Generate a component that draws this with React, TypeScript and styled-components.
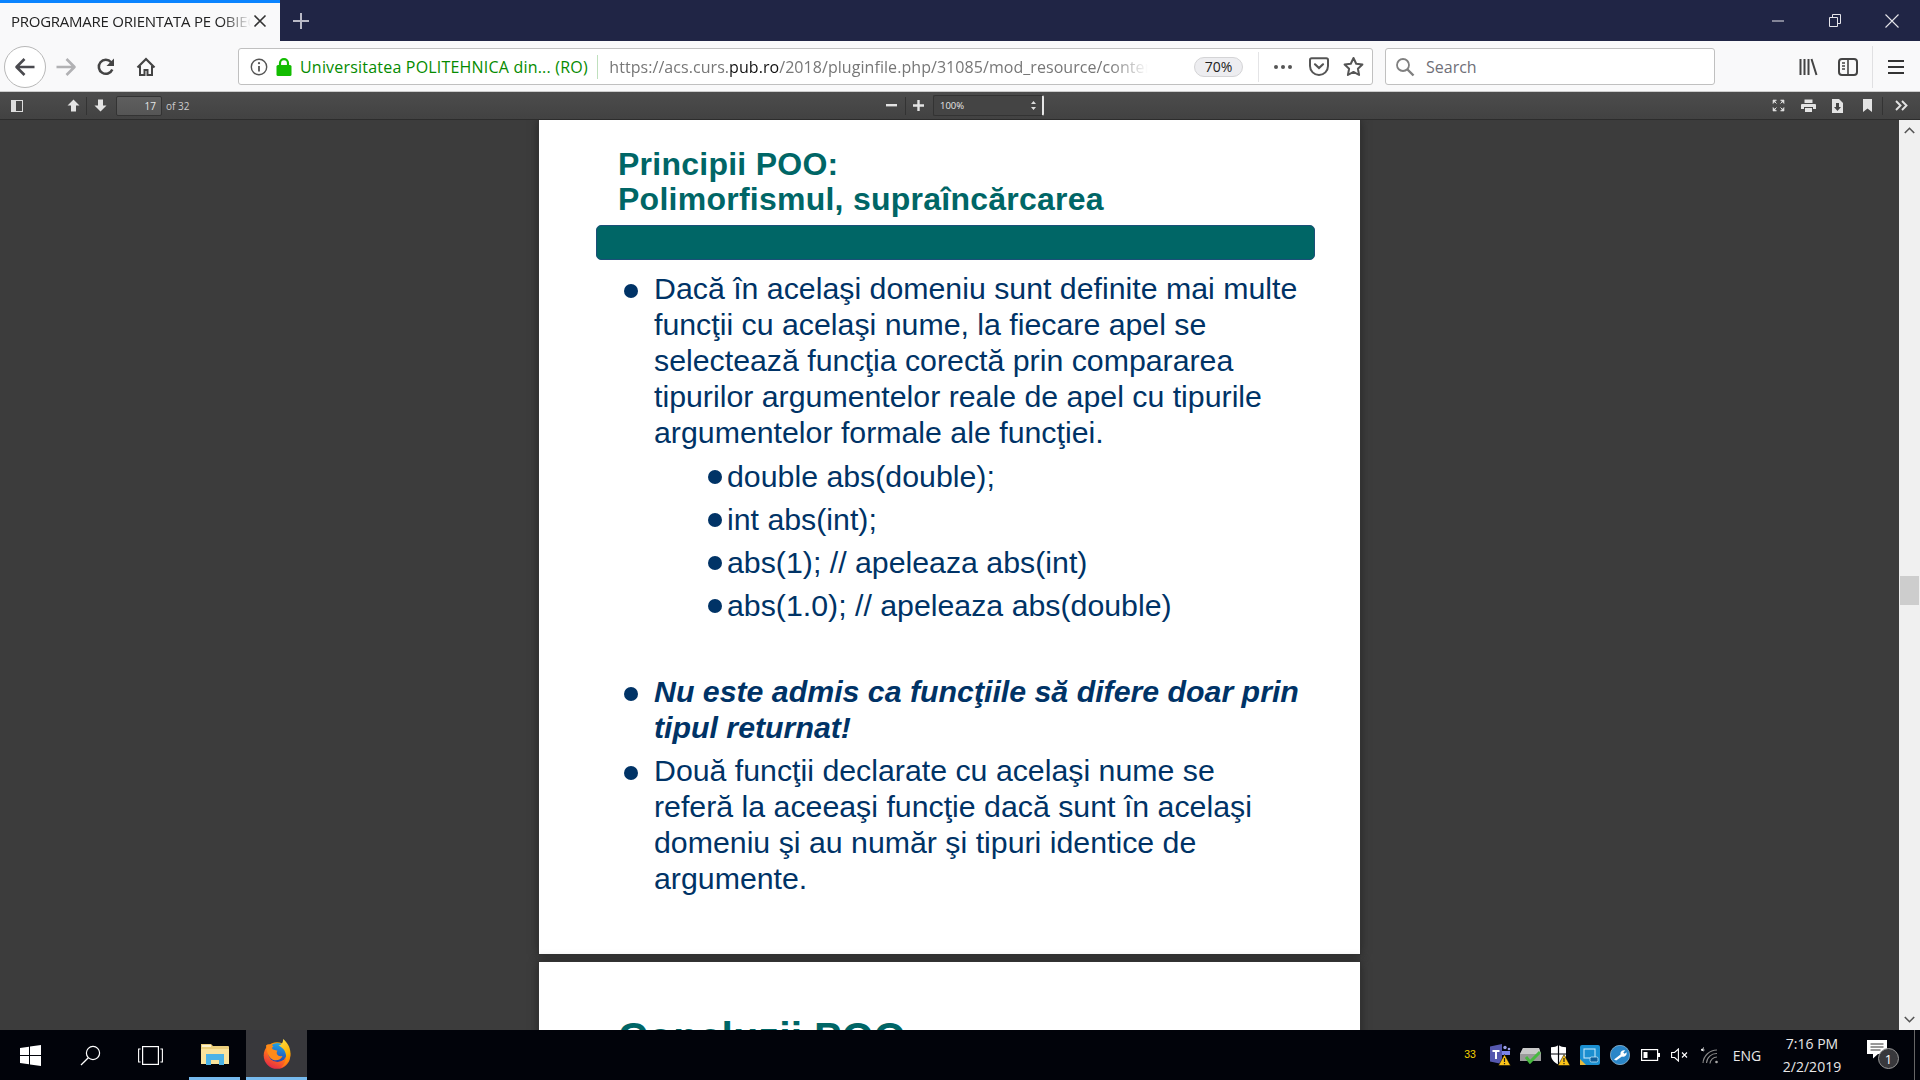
import React from "react";
import styled, { createGlobalStyle } from "styled-components";

const Global = createGlobalStyle`
  html, body { margin: 0; padding: 0; height: 100%; overflow: hidden; background: #3d3d3d; }
  #root { height: 100%; }
  * { box-sizing: border-box; }
`;

const Screen = styled.div`
  width: 1920px; height: 1080px; display: flex; flex-direction: column; overflow: hidden;
  font-family: "Open Sans", "Liberation Sans", sans-serif;
`;
const TitleBar = styled.div`
  height: 41px; background: #202545; display: flex; align-items: stretch; flex: none;
`;
const Tab = styled.div`
  width: 280px; background: #f9f9fa; border-top: 3px solid #0a84ff; display: flex; align-items: center; padding: 0 0 2px 11px;
`;
const TabLabel = styled.span`
  width: 240px; font-size: 15px; letter-spacing: -0.25px; color: #222; white-space: nowrap; overflow: hidden;
  -webkit-mask-image: linear-gradient(90deg, #000 88%, transparent 100%);
  mask-image: linear-gradient(90deg, #000 88%, transparent 100%);
`;
const Slot = styled.div<{ $w: number; $ml?: number }>`
  width: ${p => p.$w}px; margin-left: ${p => p.$ml ?? 0}px; flex: none; display: flex; align-items: center; justify-content: center;
`;
const Grow = styled.div`flex: 1;`;
const NavBar = styled.div`
  height: 51px; background: #f9f9fa; display: flex; align-items: center; padding: 1px 0 0 4px; flex: none; border-bottom: 1px solid #ccc;
`;
const BackButton = styled.div`
  width: 42px; height: 42px; border-radius: 50%; border: 1px solid #b8b8b8; background: #fff; display: flex; align-items: center; justify-content: center; flex: none;
`;
const UrlBar = styled.div`
  width: 1135px; height: 37px; margin-left: 72px; background: #fff; border: 1px solid #c0c0c0; border-radius: 3px; display: flex; align-items: center; flex: none; padding-left: 9px; font-size: 16px;
`;
const Identity = styled.span`
  color: #058b00; font-size: 16px; letter-spacing: 0.2px; margin-left: 3px; white-space: nowrap; width: 298px;
`;
const VSep = styled.div<{ $h: number; $c: string; $ml?: number }>`
  width: 1px; height: ${p => p.$h}px; background: ${p => p.$c}; margin-left: ${p => p.$ml ?? 0}px; flex: none;
`;
const Url = styled.span`
  width: 540px; margin-left: 11px; color: #777; font-size: 16px; letter-spacing: 0.06px; white-space: nowrap; overflow: hidden;
  -webkit-mask-image: linear-gradient(90deg, #000 93%, transparent 100%);
  mask-image: linear-gradient(90deg, #000 93%, transparent 100%);
  b { font-weight: 400; color: #111; }
`;
const ZoomPill = styled.span`
  width: 49px; height: 20px; margin-left: 46px; border-radius: 10px; background: #ededf0; border: 1px solid #d4d4d6; font-size: 14px; color: #222; display: flex; align-items: center; justify-content: center; flex: none;
`;
const SearchBox = styled.div`
  width: 330px; height: 37px; margin-left: 12px; background: #fff; border: 1px solid #c0c0c0; border-radius: 3px; display: flex; align-items: center; padding-left: 9px; color: #6f6f78; font-size: 16px; flex: none;
`;
const SearchLabel = styled.span`margin-left: 11px;`;
const PdfBar = styled.div`
  height: 28px; background: linear-gradient(#4c4c4c, #424242); display: flex; align-items: center; flex: none; border-bottom: 1px solid #2c2c2c; color: #d6d6d6; font-size: 10px;
`;
const PageInput = styled.div`
  width: 46px; height: 20px; margin-left: 3px; background: linear-gradient(#5e5e5e, #555); border: 1px solid #333; border-radius: 2px; display: flex; align-items: center; justify-content: flex-end; padding-right: 5px; font-size: 10px; color: #e6e6e6; flex: none;
`;
const PageCount = styled.span`margin-left: 4px; width: 30px; flex: none; color: #ccc;`;
const ZoomSelect = styled.div`
  width: 111px; height: 21px; margin-left: 3px; background: #444; border: 1px solid #333; border-right: 2px solid #e6e6e6; border-radius: 2px; display: flex; align-items: center; justify-content: space-between; padding: 0 6px; font-size: 9.5px; color: #e6e6e6; flex: none;
`;
const Content = styled.div`
  flex: 1; min-height: 0; display: flex; background: #3c3c3c;
`;
const Viewer = styled.div`
  flex: 1; min-width: 0; overflow: hidden; display: flex; flex-direction: column; align-items: center;
`;
const Sheet = styled.div<{ $h: number }>`
  width: 821px; height: ${p => p.$h}px; flex: none; background: #fff; overflow: hidden; box-shadow: 0 0 0 1px #333, 0 0 9px #222; margin-bottom: 8px;
  font-family: "Liberation Sans", Arial, sans-serif; color: #003366;
`;
const SheetTitle = styled.h1<{ $pt: number; $size: number }>`
  margin: 0; padding: ${p => p.$pt}px 0 0 79px; font-size: ${p => p.$size}px; letter-spacing: 0.25px; line-height: 34.5px; font-weight: 700; color: #006666; white-space: nowrap;
`;
const TitleBand = styled.div`
  width: 719px; height: 35px; margin: 9px 0 0 57px; background: #006666; border: 1px solid #1b4f78; border-radius: 5px;
`;
const Points = styled.ul`
  list-style: none; margin: 0; padding: 11px 0 0 85px;
`;
const Point = styled.li<{ $mt?: number; $strong?: boolean }>`
  position: relative; margin-top: ${p => p.$mt ?? 0}px; padding-left: 30px; font-size: 30.3px; line-height: 36px; white-space: nowrap;
  font-weight: ${p => (p.$strong ? 700 : 400)}; font-style: ${p => (p.$strong ? "italic" : "normal")};
  &::before { content: ""; position: absolute; left: 0; top: 13px; width: 14px; height: 14px; border-radius: 50%; background: #003366; }
`;
const SubGroup = styled.ul`
  list-style: none; margin: 4px 0 0; padding: 0;
`;
const SubPoint = styled.li`
  position: relative; padding-left: 73px; line-height: 43px; white-space: nowrap;
  &::before { content: ""; position: absolute; left: 54px; top: 15px; width: 14px; height: 14px; border-radius: 50%; background: #003366; }
`;
const Scrollbar = styled.div`
  width: 21px; flex: none; background: #f0f0f0; display: flex; flex-direction: column; align-items: center;
`;
const ScrollArrow = styled.div`height: 21px; width: 100%; display: flex; align-items: center; justify-content: center; flex: none;`;
const Thumb = styled.div`
  width: 19px; height: 29px; background: #cdcdcd; margin-top: 435px; flex: none;
`;
const Taskbar = styled.div`
  height: 50px; background: #01030a; display: flex; align-items: stretch; flex: none; color: #e8e8e8;
`;
const TaskSlot = styled.div<{ $w: number; $active?: boolean; $open?: boolean; $ml?: number }>`
  width: ${p => p.$w}px; margin-left: ${p => p.$ml ?? 0}px; flex: none; display: flex; align-items: center; justify-content: center;
  background: ${p => (p.$active ? "#38383c" : "transparent")};
  border-bottom: ${p => (p.$open ? "3px solid #76b9ed" : "0")};
`;
const TrayCount = styled.span`color: #f5d400; font-size: 10.5px; font-family: "Liberation Sans", sans-serif; margin-bottom: 3px;`;
const TrayLang = styled.span`font-size: 14px; text-align: center; font-family: "Open Sans", sans-serif;`;
const Clock = styled.div`
  width: 92px; display: flex; flex-direction: column; align-items: center; justify-content: center; gap: 4px; font-size: 14px; line-height: 19px;
`;
const Badge = styled.span`
  position: absolute; left: 11px; top: 8px; width: 21px; height: 21px; border-radius: 50%; background: #38383c; border: 1px solid #999; font-size: 13px; color: #fff; display: flex; align-items: center; justify-content: center;
`;
const NotifyWrap = styled.div`position: relative; width: 36px; height: 30px;`;
const ShowDesktop = styled.div`width: 1px; background: #666; margin-left: 11px; flex: none;`;

const Plus = () => <svg width="18" height="18" viewBox="0 0 18 18"><path d="M9 1v16M1 9h16" stroke="#b9bac6" strokeWidth="2" /></svg>;
const TabClose = () => <svg width="14" height="14" viewBox="0 0 14 14"><path d="M1.5 1.5l11 11M12.5 1.5l-11 11" stroke="#333" strokeWidth="1.6" /></svg>;
const Arrow = ({ c, flip }: { c: string; flip?: boolean }) => (
  <svg width="22" height="22" viewBox="0 0 22 22" style={flip ? { transform: "scaleX(-1)" } : undefined}><path d="M2.5 11h18M10.5 3l-8 8 8 8" fill="none" stroke={c} strokeWidth="2.6" strokeLinejoin="round" /></svg>
);
const Reload = () => <svg width="20" height="20" viewBox="0 0 20 20"><path d="M16.3 12.5a7 7 0 1 1-1.2-7.3" fill="none" stroke="#444" strokeWidth="2.5" /><path d="M18 1.5v7.5h-7.5z" fill="#444" /></svg>;
const Home = () => <svg width="20" height="20" viewBox="0 0 20 20"><path d="M1.5 10.5L10 2l8.5 8.5" fill="none" stroke="#444" strokeWidth="2.2" /><path d="M4 9v9h4.5v-5h3v5H16V9" fill="none" stroke="#444" strokeWidth="2" /></svg>;
const Info = () => <svg width="18" height="18" viewBox="0 0 18 18"><circle cx="9" cy="9" r="7.7" fill="none" stroke="#555" strokeWidth="1.4" /><path d="M9 8v5.5" stroke="#555" strokeWidth="1.8" /><circle cx="9" cy="5.2" r="1.1" fill="#555" /></svg>;
const Lock = () => <svg width="16" height="18" viewBox="0 0 16 18"><path d="M4 8V5.2a4 4 0 0 1 8 0V8" fill="none" stroke="#12bc00" strokeWidth="2.2" /><rect x="0.5" y="7" width="15" height="11" rx="1.5" fill="#12bc00" /></svg>;
const Dots = () => <svg width="20" height="6" viewBox="0 0 20 6"><g fill="#555"><circle cx="3" cy="3" r="2" /><circle cx="10" cy="3" r="2" /><circle cx="17" cy="3" r="2" /></g></svg>;
const Pocket = () => <svg width="20" height="19" viewBox="0 0 20 19"><path d="M1 3a1.7 1.7 0 0 1 1.7-1.7h14.6A1.7 1.7 0 0 1 19 3v6a9 9 0 0 1-18 0z" fill="none" stroke="#555" strokeWidth="2" /><path d="M6 7.3l4 3.8 4-3.8" fill="none" stroke="#555" strokeWidth="2.2" strokeLinecap="round" /></svg>;
const Star = () => <svg width="21" height="21" viewBox="0 0 21 21"><path d="M10.5 2l2.7 5.7 6.2.8-4.5 4.3 1.2 6.2-5.6-3.1-5.6 3.1 1.2-6.2L1.6 8.5l6.2-.8z" fill="none" stroke="#555" strokeWidth="2" strokeLinejoin="round" /></svg>;
const SearchGlass = () => <svg width="20" height="20" viewBox="0 0 20 20"><circle cx="8" cy="8" r="6" fill="none" stroke="#808080" strokeWidth="1.8" /><path d="M12.5 12.5l6 6" stroke="#808080" strokeWidth="2.4" /></svg>;
const Library = () => <svg width="20" height="20" viewBox="0 0 20 20"><path d="M2.5 2v16M6.5 2v16M10.5 2v16M13.5 2l5 16" stroke="#444" strokeWidth="2" fill="none" /></svg>;
const SidebarIcon = () => <svg width="20" height="20" viewBox="0 0 20 20"><rect x="1" y="2" width="18" height="16" rx="3" fill="none" stroke="#444" strokeWidth="2" /><path d="M10 2v16" stroke="#444" strokeWidth="1.6" /><path d="M4 6h3M4 9h3M4 12h3" stroke="#444" strokeWidth="1.6" /></svg>;
const Menu = () => <svg width="18" height="16" viewBox="0 0 18 16"><path d="M1 2h16M1 8h16M1 14h16" stroke="#333" strokeWidth="2.2" /></svg>;
const WinMin = () => <svg width="12" height="2" viewBox="0 0 12 2"><path d="M0 1h12" stroke="#e5e5ea" strokeWidth="1" /></svg>;
const WinRestore = () => <svg width="12" height="13" viewBox="0 0 12 13"><path d="M0.5 3.5h8v9h-8zM3.5 3.5v-3h8v9h-3" fill="none" stroke="#e5e5ea" strokeWidth="1" /></svg>;
const WinClose = () => <svg width="14" height="14" viewBox="0 0 14 14"><path d="M0.5 0.5l13 13M13.5 0.5l-13 13" stroke="#e5e5ea" strokeWidth="1.1" /></svg>;

const PdfSidebar = () => <svg width="12" height="12" viewBox="0 0 12 12"><rect x="0.5" y="0.5" width="11" height="11" fill="none" stroke="#ddd" /><rect x="1" y="1" width="4" height="10" fill="#ddd" /></svg>;
const PdfUp = ({ down }: { down?: boolean }) => <svg width="13" height="13" viewBox="0 0 13 13" style={down ? { transform: "rotate(180deg)" } : undefined}><path d="M6.5 0.5L12.5 6.5H9V12.5H4V6.5H0.5z" fill="#e3e3e3" /></svg>;
const PdfMinus = () => <svg width="11" height="3" viewBox="0 0 11 3"><rect width="11" height="2.4" fill="#e3e3e3" /></svg>;
const PdfPlus = () => <svg width="11" height="11" viewBox="0 0 11 11"><path d="M0 4.3h11v2.4H0zM4.3 0h2.4v11H4.3z" fill="#e3e3e3" /></svg>;
const SelectArrows = () => <svg width="5" height="9" viewBox="0 0 5 9"><path d="M2.5 0L5 3H0zM2.5 9L0 6h5z" fill="#ddd" /></svg>;
const PdfFull = () => <svg width="13" height="13" viewBox="0 0 13 13"><path d="M1 1h3.5L1 4.5zM12 1v3.5L8.5 1zM1 12V8.5L4.5 12zM12 12H8.5L12 8.5z" fill="#ddd" stroke="#ddd" strokeWidth="0.6" /><path d="M2 2l2.5 2.5M11 2L8.5 4.5M2 11l2.5-2.5M11 11L8.5 8.5" stroke="#ddd" strokeWidth="1" /></svg>;
const PdfPrint = () => <svg width="15" height="13" viewBox="0 0 15 13"><path d="M3.5 0.5h8v3.5h-8z" fill="#e3e3e3" /><path d="M1 5h13a1 1 0 0 1 1 1v4h-3V8H3v2H0V6a1 1 0 0 1 1-1z" fill="#e3e3e3" /><path d="M4 9h7v4H4z" fill="#e3e3e3" /></svg>;
const PdfSave = () => <svg width="11" height="14" viewBox="0 0 11 14"><path d="M0 0h7l4 4v10H0z" fill="#e3e3e3" /><path d="M4 4h3v4h2l-3.5 4L2 8h2z" fill="#444" /></svg>;
const PdfMark = () => <svg width="9" height="13" viewBox="0 0 9 13"><path d="M0 0h9v13L4.5 9.5 0 13z" fill="#e3e3e3" /></svg>;
const PdfMore = () => <svg width="13" height="11" viewBox="0 0 13 11"><path d="M1 1l4.5 4.5L1 10M7 1l4.5 4.5L7 10" fill="none" stroke="#e3e3e3" strokeWidth="1.9" /></svg>;
const ScrollChevron = ({ down }: { down?: boolean }) => <svg width="11" height="7" viewBox="0 0 11 7" style={down ? { transform: "rotate(180deg)" } : undefined}><path d="M0.8 6L5.5 1.3 10.2 6" fill="none" stroke="#555" strokeWidth="1.6" /></svg>;

const WinLogo = () => <svg width="21" height="21" viewBox="0 0 21 21"><path d="M0 3l9-1.3V10H0zM10 1.5L21 0v10H10zM0 11h9v8.3L0 18zM10 11h11v10l-11-1.5z" fill="#fff" /></svg>;
const TaskSearch = () => <svg width="21" height="21" viewBox="0 0 21 21"><circle cx="13" cy="8" r="6.6" fill="none" stroke="#fff" strokeWidth="1.2" /><path d="M8.3 12.7L1 20" stroke="#fff" strokeWidth="1.3" /></svg>;
const TaskView = () => <svg width="25" height="19" viewBox="0 0 25 19"><rect x="4.6" y="0.6" width="15.8" height="17.8" fill="none" stroke="#fff" strokeWidth="1.2" /><path d="M2.6 3H0.6v13h2M22.4 3h2v13h-2" fill="none" stroke="#fff" strokeWidth="1.1" /></svg>;
const Folder = () => (
  <svg width="28" height="22" viewBox="0 0 28 22">
    <path d="M0 1h10l2 2h15a1 1 0 0 1 1 1v17H0z" fill="#eccf7c" />
    <path d="M1 2h9v2H1z" fill="#fbf2cf" />
    <path d="M0 6h28v15H0z" fill="#f9e39c" />
    <path d="M5 22V11h18v11h-5v-5h-8v5z" fill="#4bb2e6" />
  </svg>
);
const Firefox = () => (
  <svg width="28" height="30" viewBox="0 0 28 30">
    <defs>
      <linearGradient id="ffBody" x1="0.7" y1="0" x2="0.2" y2="1"><stop offset="0" stopColor="#ffa800" /><stop offset="0.55" stopColor="#ff6a1e" /><stop offset="1" stopColor="#e0204e" /></linearGradient>
      <linearGradient id="ffTail" x1="0" y1="0" x2="0.3" y2="1"><stop offset="0" stopColor="#ffe24a" /><stop offset="0.7" stopColor="#ffb000" /><stop offset="1" stopColor="#ff7a10" /></linearGradient>
      <linearGradient id="ffBall" x1="0.6" y1="0" x2="0.4" y2="1"><stop offset="0" stopColor="#1ea7ea" /><stop offset="1" stopColor="#2a3fa8" /></linearGradient>
    </defs>
    <circle cx="14" cy="16.500" r="13.300" fill="url(#ffBody)" />
    <circle cx="14.500" cy="13.500" r="9.500" fill="url(#ffBall)" />
    <path d="M3 6.500C5 4.500 8 5 10.500 7.500 9 8 8.500 9.500 10 10.500l4.500 1.200C12.500 14 14.500 18 19.500 17 18 21.500 11 23 7.500 19 4.500 16 3.500 11 3 6.500z" fill="#ff8a18" />
    <path d="M20 0c4 3 8.500 9 7.300 17-.8 5.500-4.500 10-9.300 11.500 4-3.500 5.500-8 5-12.500-.5-4.500-3.500-7.500-7.500-9.500 2.500-.5 5-3 4.500-6.500z" fill="url(#ffTail)" />
  </svg>
);
const WarnTri = ({ x, y }: { x: number; y: number }) => (
  <g transform={`translate(${x} ${y})`}><path d="M6 0l6 11H0z" fill="#fcc419" stroke="#000" strokeWidth="0.5" /><path d="M6 3.5v4M6 8.500v1.300" stroke="#222" strokeWidth="1.2" /></g>
);
const Teams = () => (
  <svg width="21" height="22" viewBox="0 0 21 22">
    <path d="M0 2.500l12-2.500v20L0 17.500z" fill="#5558af" />
    <path d="M2.500 6h7v2H7v7H5V8H2.500z" fill="#fff" />
    <circle cx="15" cy="3.500" r="1.700" fill="#9aa0e8" /><circle cx="19" cy="5" r="1.300" fill="#9aa0e8" />
    <path d="M12 7h8v4h-8z" fill="#7b83eb" />
    <WarnTri x={8.500} y={10.500} />
  </svg>
);
const DriveCheck = () => (
  <svg width="21" height="18" viewBox="0 0 21 18">
    <path d="M3 2h16l2 6v7H0V8z" fill="#9a9a9a" /><path d="M3 2h16l2 6H0z" fill="#c9c9c9" />
    <path d="M6 11l4 5 10-10" fill="none" stroke="#47b93f" strokeWidth="3" />
  </svg>
);
const ShieldWarn = () => (
  <svg width="20" height="21" viewBox="0 0 20 21">
    <path d="M8.500 0c2 1.500 4.500 2.200 7.500 2.200V10c0 4-3 7.500-7.500 9.500C4 17.500 1 14 1 10V2.200C4 2.200 6.500 1.500 8.500 0z" fill="#fff" />
    <path d="M8.500 0v19.500M1 9h15" stroke="#01030a" strokeWidth="1.200" />
    <WarnTri x={8} y={9.500} />
  </svg>
);
const IntelBadge = () => (
  <svg width="20" height="20" viewBox="0 0 20 20">
    <rect width="20" height="20" rx="2" fill="#1b8fd0" />
    <path d="M0 14l6 6H0z" fill="#e7b93b" />
    <rect x="4" y="4" width="11" height="9" fill="none" stroke="#bfe6fa" strokeWidth="1.100" />
    <rect x="10" y="12" width="8" height="5" rx="1.500" fill="#0e5f9b" stroke="#bfe6fa" strokeWidth="0.800" />
  </svg>
);
const Wrench = () => (
  <svg width="20" height="20" viewBox="0 0 20 20">
    <circle cx="10" cy="10" r="9.700" fill="#2a86c8" stroke="#b9dcf2" strokeWidth="0.600" />
    <path d="M4 14.500l6.500-5a3.500 3.500 0 0 1 4.800-4l-2 2 1.300 1.300 2-1.500a3.500 3.500 0 0 1-4.600 4.200l-5.800 4z" fill="#fff" />
  </svg>
);
const Battery = () => <svg width="19" height="12" viewBox="0 0 19 12"><rect x="0.600" y="0.600" width="16" height="10.800" fill="none" stroke="#fff" strokeWidth="1.200" /><rect x="2.500" y="3" width="4" height="6" fill="#fff" /><rect x="17" y="4" width="2" height="4" fill="#fff" /></svg>;
const Muted = () => <svg width="19" height="14" viewBox="0 0 19 14"><path d="M0.600 4.500h3L7.400 1v12L3.600 9.500h-3z" fill="none" stroke="#fff" strokeWidth="1.100" /><path d="M11 4.500l5 5M16 4.500l-5 5" stroke="#fff" strokeWidth="1.100" /></svg>;
const Wifi = () => (
  <svg width="20" height="20" viewBox="0 0 20 20">
    <path d="M1 4l2.500 2M3.500 2.500L2 6M1 5h3.500" stroke="#fff" strokeWidth="0.900" />
    <path d="M3 18A14 14 0 0 1 17 5M6.500 18A10 10 0 0 1 17 8.500M10 18.500a7 7 0 0 1 7-6.500" fill="none" stroke="#8a8a8a" strokeWidth="1.100" />
    <circle cx="16.500" cy="17" r="1.300" fill="#aaa" />
  </svg>
);
const Bubble = () => <svg width="21" height="19" viewBox="0 0 21 19"><path d="M0 0h20v14h-9l-5 4.500V14H0z" fill="#fff" /><path d="M3.500 4h13M3.500 7h13M3.500 10h10" stroke="#333" strokeWidth="1" /></svg>;

export default function App() {
  return (
    <Screen>
      <Global />
      <TitleBar>
        <Tab>
          <TabLabel>PROGRAMARE ORIENTATA PE OBIECTE</TabLabel>
          <Slot $w={18}><TabClose /></Slot>
        </Tab>
        <Slot $w={42}><Plus /></Slot>
        <Grow />
        <Slot $w={56}><WinMin /></Slot>
        <Slot $w={57}><WinRestore /></Slot>
        <Slot $w={57}><WinClose /></Slot>
      </TitleBar>
      <NavBar>
        <BackButton><Arrow c="#4a4a4f" /></BackButton>
        <Slot $w={40}><Arrow c="#b1b1b3" flip /></Slot>
        <Slot $w={40}><Reload /></Slot>
        <Slot $w={40}><Home /></Slot>
        <UrlBar>
          <Slot $w={22}><Info /></Slot>
          <Slot $w={27}><Lock /></Slot>
          <Identity>Universitatea POLITEHNICA din... (RO)</Identity>
          <VSep $h={24} $c="#bfe0bd" />
          <Url>https://acs.curs.<b>pub.ro</b>/2018/pluginfile.php/31085/mod_resource/content/1/</Url>
          <ZoomPill>70%</ZoomPill>
          <VSep $h={30} $c="#e4e4e6" $ml={15} />
          <Slot $w={48}><Dots /></Slot>
          <Slot $w={24}><Pocket /></Slot>
          <Slot $w={38} $ml={3}><Star /></Slot>
        </UrlBar>
        <SearchBox>
          <SearchGlass />
          <SearchLabel>Search</SearchLabel>
        </SearchBox>
        <Slot $w={40} $ml={73}><Library /></Slot>
        <Slot $w={40}><SidebarIcon /></Slot>
        <VSep $h={42} $c="#e0e0e2" $ml={4} />
        <Slot $w={45}><Menu /></Slot>
      </NavBar>
      <PdfBar>
        <Slot $w={34}><PdfSidebar /></Slot>
        <Slot $w={18} $ml={30}><PdfUp /></Slot>
        <VSep $h={18} $c="#333" $ml={4} />
        <Slot $w={26}><PdfUp down /></Slot>
        <PageInput>17</PageInput>
        <PageCount>of 32</PageCount>
        <Slot $w={28} $ml={681}><PdfMinus /></Slot>
        <VSep $h={18} $c="#333" />
        <Slot $w={24}><PdfPlus /></Slot>
        <ZoomSelect><span>100%</span><SelectArrows /></ZoomSelect>
        <Grow />
        <Slot $w={30}><PdfFull /></Slot>
        <Slot $w={30}><PdfPrint /></Slot>
        <Slot $w={29}><PdfSave /></Slot>
        <Slot $w={30}><PdfMark /></Slot>
        <VSep $h={18} $c="#333" />
        <Slot $w={37}><PdfMore /></Slot>
      </PdfBar>
      <Content>
        <Viewer>
          <Sheet $h={834}>
            <SheetTitle $pt={27} $size={32}>Principii POO:<br />Polimorfismul, supraîncărcarea</SheetTitle>
            <TitleBand />
            <Points>
              <Point>
                Dacă în acelaşi domeniu sunt definite mai multe<br />
                funcţii cu acelaşi nume, la fiecare apel se<br />
                selectează funcţia corectă prin compararea<br />
                tipurilor argumentelor reale de apel cu tipurile<br />
                argumentelor formale ale funcţiei.
                <SubGroup>
                  <SubPoint>double abs(double);</SubPoint>
                  <SubPoint>int abs(int);</SubPoint>
                  <SubPoint>abs(1); // apeleaza abs(int)</SubPoint>
                  <SubPoint>abs(1.0); // apeleaza abs(double)</SubPoint>
                </SubGroup>
              </Point>
              <Point $mt={47} $strong>
                Nu este admis ca funcţiile să difere doar prin<br />
                tipul returnat!
              </Point>
              <Point $mt={7}>
                Două funcţii declarate cu acelaşi nume se<br />
                referă la aceeaşi funcţie dacă sunt în acelaşi<br />
                domeniu şi au număr şi tipuri identice de<br />
                argumente.
              </Point>
            </Points>
          </Sheet>
          <Sheet $h={400}>
            <SheetTitle $pt={58} $size={41}>Concluzii POO</SheetTitle>
          </Sheet>
        </Viewer>
        <Scrollbar>
          <ScrollArrow><ScrollChevron /></ScrollArrow>
          <Thumb />
          <Grow />
          <ScrollArrow><ScrollChevron down /></ScrollArrow>
        </Scrollbar>
      </Content>
      <Taskbar>
        <TaskSlot $w={60}><WinLogo /></TaskSlot>
        <TaskSlot $w={60}><TaskSearch /></TaskSlot>
        <TaskSlot $w={60}><TaskView /></TaskSlot>
        <TaskSlot $w={51} $ml={9} $open><Folder /></TaskSlot>
        <TaskSlot $w={61} $ml={6} $active $open><Firefox /></TaskSlot>
        <Grow />
        <TaskSlot $w={30}><TrayCount>33</TrayCount></TaskSlot>
        <TaskSlot $w={30}><Teams /></TaskSlot>
        <TaskSlot $w={30}><DriveCheck /></TaskSlot>
        <TaskSlot $w={30}><ShieldWarn /></TaskSlot>
        <TaskSlot $w={30}><IntelBadge /></TaskSlot>
        <TaskSlot $w={30}><Wrench /></TaskSlot>
        <TaskSlot $w={30}><Battery /></TaskSlot>
        <TaskSlot $w={30}><Muted /></TaskSlot>
        <TaskSlot $w={30}><Wifi /></TaskSlot>
        <TaskSlot $w={38} $ml={3}><TrayLang>ENG</TrayLang></TaskSlot>
        <Clock><span>7:16 PM</span><span>2/2/2019</span></Clock>
        <TaskSlot $w={36} $ml={9}><NotifyWrap><Bubble /><Badge>1</Badge></NotifyWrap></TaskSlot>
        <ShowDesktop />
        <Slot $w={5} />
      </Taskbar>
    </Screen>
  );
}
